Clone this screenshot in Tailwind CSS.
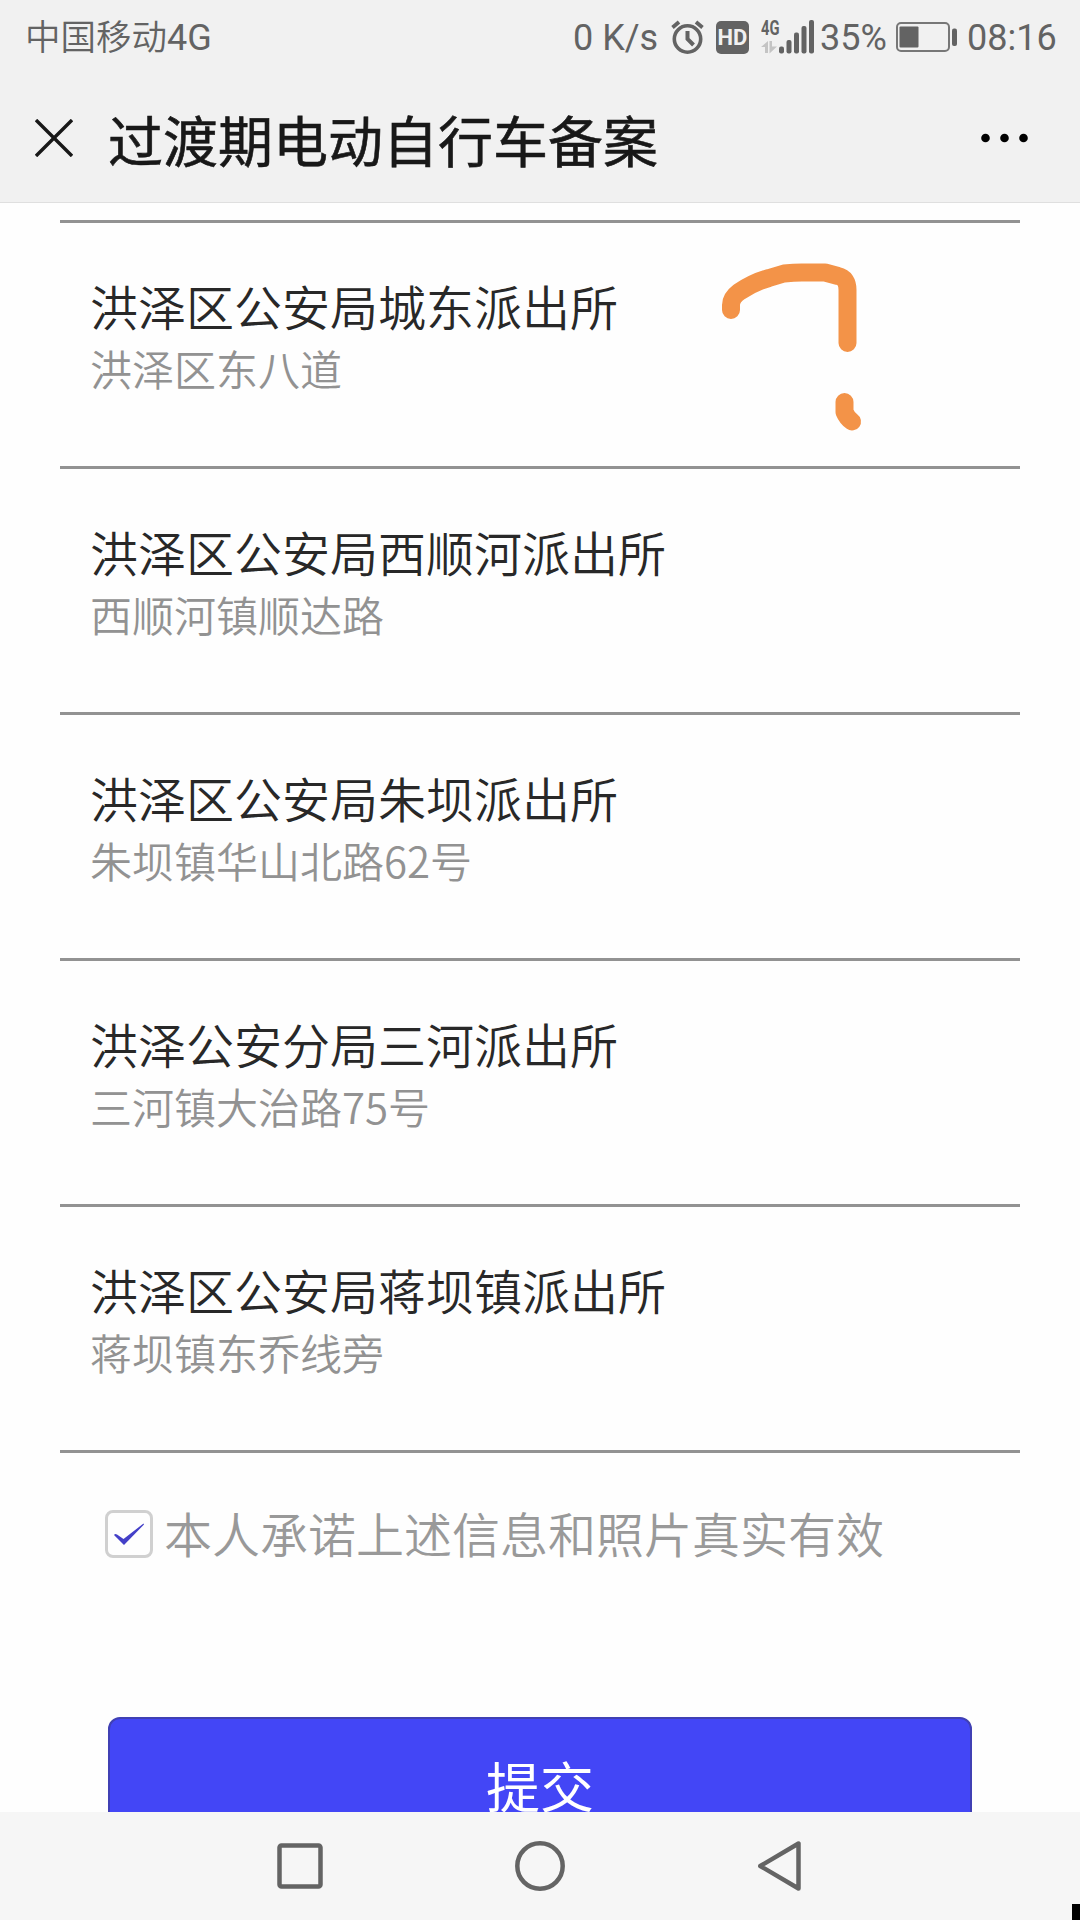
<!DOCTYPE html>
<html lang="zh-CN">
<head>
    <meta charset="UTF-8">
    <meta name="viewport" content="width=device-width, initial-scale=1.0">
    <title>过渡期电动自行车备案</title>
    <script src="https://cdn.jsdelivr.net/npm/@tailwindcss/browser@4"></script>
</head>
<body class="bg-[#fefefe] font-['Noto_Sans_CJK_SC',sans-serif]">
    <div class="relative w-[1080px] h-[1920px] flex flex-col overflow-hidden">
        <!-- Status bar -->
        <div class="h-[74px] shrink-0 bg-[#f1f1f1] flex items-center text-[#636363] font-[Roboto,'Noto_Sans_CJK_SC',sans-serif] text-[36px] leading-none whitespace-nowrap">
            <div class="w-[573px] pl-[25px] pt-[3px]"><span class="text-[35.5px] font-[350]">中国移动</span><span>4G</span></div>
            <div class="w-[98px] pt-[2px]">0 K/s</div>
            <svg class="w-[33px] h-[34px]" viewBox="0 0 33 34" fill="none" stroke="#636363" stroke-width="3.6">
                <circle cx="16.5" cy="19" r="13.2"/>
                <path d="M16.5 11v8l6 6" stroke-width="4"/>
                <path d="M1.5 7.500L8 2M31.500 7.500L25 2" stroke-width="3.800"/>
            </svg>
            <div class="ml-3 w-[33px] h-[33px] pt-[2px] rounded-[5px] bg-[#636363] text-[#f1f1f1] text-[22px] font-bold flex items-center justify-center">HD</div>
            <div class="ml-3 w-[18px] h-[34px] flex flex-col justify-between">
                <div class="text-[21px] leading-[17px] font-bold w-[26px] origin-left scale-x-70">4G</div>
                <svg class="w-[16px] h-[13px]" viewBox="0 0 16 13" fill="#c4c4c4">
                    <path d="M7 0v12H4V6H0zM8.500 0h2.500v5.500h5L8.500 12.500z"/>
                </svg>
            </div>
            <svg class="w-[36px] h-[34px]" viewBox="0 0 36 34" fill="#636363">
                <rect x="0" y="26.500" width="5" height="7" rx="2"/>
                <rect x="7.500" y="20" width="5" height="13.500" rx="2"/>
                <rect x="15" y="12.500" width="5" height="21" rx="2"/>
                <rect x="22.500" y="6" width="5" height="27.500" rx="2"/>
                <rect x="30" y="0" width="5" height="33.500" rx="2"/>
            </svg>
            <div class="ml-[5px] w-[76px] pt-[2px]">35%</div>
            <svg class="w-[62px] h-[30px]" viewBox="0 0 62 30" fill="#636363">
                <rect x="1" y="1" width="52" height="28" rx="4" fill="none" stroke="#777" stroke-width="2"/>
                <rect x="3.500" y="4.500" width="19" height="21" rx="1"/>
                <rect x="56" y="6.500" width="5" height="17.500" rx="2"/>
            </svg>
            <div class="ml-[9px] pt-[2px]">08:16</div>
        </div>

        <!-- Title bar -->
        <div class="h-[129px] shrink-0 bg-[#f1f1f1] border-b border-[#dfdfdf] flex items-center pl-[35px] pr-[52px]">
            <svg class="w-[38px] h-[38px]" viewBox="0 0 38 38" fill="none" stroke="#181818" stroke-width="3.400">
                <path d="M1 1l36 36M37 1L1 37"/>
            </svg>
            <h1 class="ml-[35px] text-[55px] leading-none font-normal text-[#181818] [-webkit-text-stroke:0.6px_#181818]">过渡期电动自行车备案</h1>
            <svg class="ml-auto w-[47px] h-[10px]" viewBox="0 0 47 10">
                <circle cx="4.500" cy="5" r="4.300"/>
                <circle cx="23.500" cy="5" r="4.300"/>
                <circle cx="42.500" cy="5" r="4.300"/>
            </svg>
        </div>

        <!-- Station list -->
        <ul class="mx-[60px] mt-[17px] shrink-0 border-t-3 border-[#929292]">
            <li class="h-[246px] pl-[30px] pt-[52px] border-b-3 border-[#929292]">
                <p class="text-[48px] leading-[60px] text-[#282828] font-[350]">洪泽区公安局城东派出所</p>
                <p class="mt-[3px] text-[42px] leading-[60px] text-[#929292] font-[350]">洪泽区东八道</p>
            </li>
            <li class="h-[246px] pl-[30px] pt-[52px] border-b-3 border-[#929292]">
                <p class="text-[48px] leading-[60px] text-[#282828] font-[350]">洪泽区公安局西顺河派出所</p>
                <p class="mt-[3px] text-[42px] leading-[60px] text-[#929292] font-[350]">西顺河镇顺达路</p>
            </li>
            <li class="h-[246px] pl-[30px] pt-[52px] border-b-3 border-[#929292]">
                <p class="text-[48px] leading-[60px] text-[#282828] font-[350]">洪泽区公安局朱坝派出所</p>
                <p class="mt-[3px] text-[42px] leading-[60px] text-[#929292] font-[350]">朱坝镇华山北路62号</p>
            </li>
            <li class="h-[246px] pl-[30px] pt-[52px] border-b-3 border-[#929292]">
                <p class="text-[48px] leading-[60px] text-[#282828] font-[350]">洪泽公安分局三河派出所</p>
                <p class="mt-[3px] text-[42px] leading-[60px] text-[#929292] font-[350]">三河镇大治路75号</p>
            </li>
            <li class="h-[246px] pl-[30px] pt-[52px] border-b-3 border-[#929292]">
                <p class="text-[48px] leading-[60px] text-[#282828] font-[350]">洪泽区公安局蒋坝镇派出所</p>
                <p class="mt-[3px] text-[42px] leading-[60px] text-[#929292] font-[350]">蒋坝镇东乔线旁</p>
            </li>
        </ul>

        <!-- Agreement -->
        <label class="mt-[51px] ml-[105px] h-[60px] shrink-0 flex items-center">
            <span class="w-[48px] h-[48px] rounded-lg border-3 border-[#d0d0d0] flex items-center justify-center">
                <svg class="w-[30px] h-[22px] shrink-0" viewBox="0 0 30 22" fill="#4440c8">
                    <path d="M0 12Q1 10.500 3 11.500L9.500 16 29.500 .5 30 1.500 10 22z"/>
                </svg>
            </span>
            <span class="ml-[11px] pb-[5px] text-[48px] leading-[60px] text-[#999] font-[350]">本人承诺上述信息和照片真实有效</span>
        </label>

        <!-- Submit button, cut off by the navigation bar -->
        <div class="flex-1 min-h-0 overflow-hidden px-[108px] pt-[153px]">
            <button class="w-full h-[138px] rounded-xl border-2 border-[#4040b4] bg-[#4346f6] text-white text-[54px] leading-[130px] pb-[3px]">提交</button>
        </div>

        <!-- Navigation bar -->
        <div class="h-[108px] shrink-0 bg-[#f6f6f6] flex items-center justify-center">
            <svg class="w-[50px] h-[50px]" viewBox="0 0 50 50" fill="none" stroke="#646464" stroke-width="4.500">
                <rect x="4.500" y="4.500" width="41" height="41" rx="2"/>
            </svg>
            <svg class="mx-[190px] w-[50px] h-[50px]" viewBox="0 0 50 50" fill="none" stroke="#646464" stroke-width="4.500">
                <circle cx="25" cy="25" r="22.700"/>
            </svg>
            <svg class="w-[50px] h-[50px]" viewBox="0 0 50 50" fill="none" stroke="#646464" stroke-width="4.500" stroke-linejoin="round">
                <path d="M43.500 2.500v45L5.300 25z"/>
            </svg>
        </div>

        <!-- Hand-drawn mark -->
        <svg class="absolute left-[660px] top-[230px] w-[260px] h-[260px]" viewBox="0 0 260 260" fill="none" stroke="#f39348" stroke-width="18" stroke-linecap="round" stroke-linejoin="round">
            <path d="M71 80V75Q71 68 79 62Q94 52 109 48L124 43.500Q134 42.500 142 42.500H165L178 46Q187.500 48 187.500 60V113"/>
            <path d="M184.500 172v10Q187 188 192 191.500"/>
        </svg>
        <div class="absolute right-0 bottom-0 w-2 h-4 bg-black"></div>
    </div>
</body>
</html>
